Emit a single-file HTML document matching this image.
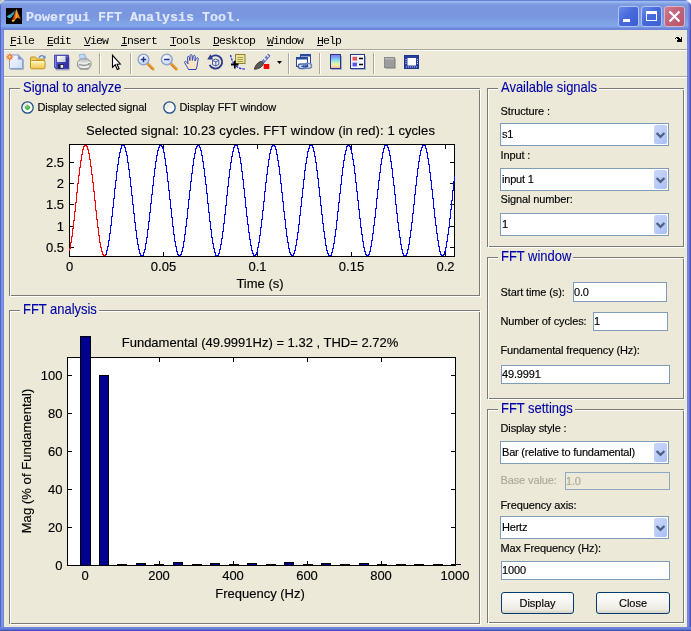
<!DOCTYPE html>
<html><head><meta charset="utf-8"><title>Powergui FFT Analysis Tool.</title>
<style>
html,body{margin:0;padding:0;}
body{width:691px;height:631px;overflow:hidden;background:#ece9d8;position:relative;font-family:"Liberation Sans",sans-serif;font-size:11px;color:#000;}
.abs{position:absolute;}
#fg{position:absolute;left:0;top:0;width:691px;height:631px;will-change:transform;-webkit-text-stroke:0.15px;}
#win{position:absolute;left:0;top:0;width:691px;height:631px;background:#ece9d8;overflow:hidden;}
/* window frame */
#titlebar{position:absolute;left:0;top:0;width:691px;height:30px;
 background:linear-gradient(to bottom,#6282dc 0px,#6282dc 1px,#9db8eb 1px,#9db8eb 2px,#8cabe7 3px,#7e9ee2 4px,#7a96df 6px,#7a96df 17px,#82a7e8 25px,#7fa2e6 27px,#6e88dc 28px,#6a82d8 30px);}
#bl{position:absolute;left:0;top:30px;width:4px;height:601px;background:linear-gradient(to right,#5560cc 0,#5560cc 1px,#7b8fe0 1px,#7b8fe0 2px,#7a98e4 2px,#7a98e4 3px,#6c88dc 3px,#6c88dc 4px);}
#br{position:absolute;left:687px;top:30px;width:4px;height:601px;background:linear-gradient(to right,#7088e0 0,#7088e0 1px,#7488e0 1px,#7488e0 2px,#6070d0 2px,#6070d0 3px,#4850b8 3px,#4850b8 4px);}
#bb{position:absolute;left:0;top:627px;width:691px;height:4px;background:linear-gradient(to bottom,#6c84dc 0,#6c84dc 1px,#6a80da 1px,#6a80da 2px,#5c6ed0 2px,#5c6ed0 3px,#4850b8 3px,#4850b8 4px);}
.corner{position:absolute;width:8px;height:8px;top:0;}
#title{position:absolute;left:26px;top:9px;height:18px;line-height:18px;font-family:"Liberation Mono",monospace;font-weight:bold;font-size:13.33px;color:#dfe8fa;white-space:pre;letter-spacing:0;}
.capbtn{position:absolute;top:6px;width:21px;height:21px;box-sizing:border-box;border:1px solid #b3c3f0;border-radius:3px;background:linear-gradient(135deg,#6b8ae6 0%,#4669dc 45%,#3c5fd4 100%);}
#cclose{background:linear-gradient(135deg,#cf7d90 0%,#c06079 50%,#b9566f 100%);border-color:#d9b5c4;}
/* menu */
#menubar{position:absolute;left:4px;top:30px;width:683px;height:19px;background:#ece9d8;}
.mi{position:absolute;top:35px;height:12px;line-height:12px;font-family:"Liberation Mono",monospace;font-size:11.5px;letter-spacing:-0.9px;white-space:pre;color:#000;-webkit-text-stroke:0;}
.mi u{text-decoration:underline;text-decoration-thickness:1px;text-underline-offset:1px;}
.hline{position:absolute;left:4px;width:683px;height:1px;}
.tsep{position:absolute;top:53px;width:1px;height:21px;background:#aca899;box-shadow:1px 0 0 #fff;}
.ico{position:absolute;top:54px;width:16px;height:16px;}
/* panels */
.panel{position:absolute;box-sizing:border-box;border:1px solid #7c7a72;}
.panel:after{content:"";position:absolute;left:0;top:0;width:calc(100% + 2px);height:calc(100% + 2px);box-sizing:border-box;border:1px solid #fff;}
.ptitle{-webkit-text-stroke:0.1px;letter-spacing:-0.03px;transform:scaleY(1.09);transform-origin:0 12px;position:absolute;height:15px;line-height:15px;font-size:13px;color:#0000a8;padding:0 2px 0 3px;white-space:pre;}
.ptitle:before{content:"";position:absolute;left:0;right:0;top:7.5px;height:3.5px;background:#ece9d8;z-index:-1;}
.lbl{position:absolute;height:13px;line-height:13px;font-size:11px;white-space:pre;color:#000;letter-spacing:-0.12px;}
.t13{position:absolute;height:15px;line-height:15px;font-size:13px;white-space:pre;color:#000;}
.ctr{transform:translateX(-50%);}
.rt{transform:translateX(-100%);}
.edit{position:absolute;box-sizing:border-box;border:1px solid #7f9db9;background:#fff;font-size:11px;line-height:13px;white-space:pre;}
.edit span{position:absolute;left:0px;letter-spacing:-0.15px;}
.dd{position:absolute;box-sizing:border-box;border:1px solid #7f9db9;background:#fff;width:169px;height:23px;left:500px;}
.dd span{position:absolute;left:1px;top:4px;line-height:13px;font-size:11px;white-space:pre;letter-spacing:-0.2px;}
.ddb{position:absolute;right:1px;top:1px;width:13px;height:19px;border-radius:2px;box-sizing:border-box;background:linear-gradient(135deg,#c9d6fb 0%,#bccdf8 50%,#a9bdf4 100%);}
.btn{position:absolute;box-sizing:border-box;width:74px;height:22px;border:1px solid #003c74;border-radius:3px;background:linear-gradient(to bottom,#ffffff 0%,#f5f4ef 50%,#ebe9e0 85%,#d6d0c5 100%);font-size:11px;line-height:20px;text-align:center;}
svg{position:absolute;left:0;top:0;overflow:visible;}
</style></head><body>
<div id="win">
<div id="fg">
<div id="titlebar"></div>
<div id="tle" class="abs" style="left:0;top:3px;width:1px;height:27px;background:#5866cf"></div><div id="tre" class="abs" style="left:688px;top:3px;width:3px;height:27px;background:linear-gradient(to right,rgba(104,120,216,0.5) 0,rgba(104,120,216,0.5) 1px,#6c78d6 1px,#6c78d6 2px,#4e58c0 2px,#4e58c0 3px)"></div><div id="bl"></div><div id="br"></div><div id="bb"></div>
<!-- outer rounded corners -->
<svg width="691" height="10" style="left:0;top:0">
 <path d="M0,0 H5.5 C2.6,0.8 0.8,2.6 0,5 Z" fill="#e4e4e0"/><path d="M0,0 H2.6 L0,2.6 Z" fill="#bcbcb4"/>
 <path d="M691,0 H685.5 C688.4,0.8 690.2,2.6 691,5 Z" fill="#fdfdfd"/>
</svg>
<!-- app icon -->
<svg width="16" height="16" style="left:6px;top:8px" viewBox="0 0 16 16">
 <defs><linearGradient id="mlb" x1="0" y1="0" x2="1" y2="0"><stop offset="0" stop-color="#8c2208"/><stop offset="0.45" stop-color="#e8641a"/><stop offset="0.7" stop-color="#f58a1e"/><stop offset="1" stop-color="#c8440e"/></linearGradient>
 <linearGradient id="mlw" x1="0" y1="1" x2="1" y2="0"><stop offset="0" stop-color="#46c4e4"/><stop offset="1" stop-color="#1e7ea4"/></linearGradient></defs>
 <rect width="16" height="16" fill="#000"/>
 <path d="M0.6,8.2 C3,7.4 5.5,5.6 8.8,2.6 L8.2,5.8 C7,7.2 6.2,8 5.8,9 C4.8,9.6 3.8,10.2 3,10.2 C2.2,9.4 1.4,8.8 0.6,8.2 Z" fill="url(#mlw)"/>
 <path d="M10.3,1 C11.5,3 12.6,6.5 14.8,11.6 C13.2,10.4 12.2,9.6 11.3,9.7 C9.8,10.4 8.6,13.4 6.9,13.9 C6.3,13.4 6,12.8 5.6,12.2 C7.2,9.8 8.8,5 10.3,1 Z" fill="url(#mlb)"/>
 <path d="M10.3,1 C10.7,4 10.9,7 10.8,9.8 C10.3,9.9 9.9,10.3 9.5,10.7 C9.9,7.5 10,4 10.3,1Z" fill="#f9c22e"/>
 <path d="M5.6,12.2 C6,12.8 6.3,13.4 6.9,13.9 C7.8,13.6 8.4,12.6 9,11.6 C7.8,12.2 6.6,12.3 5.6,12.2Z" fill="#f8dc3a"/>
</svg>
<div id="title">Powergui FFT Analysis Tool.</div>
<div class="capbtn" style="left:618px"><div class="abs" style="left:4px;top:12px;width:7px;height:3px;background:#fff"></div></div>
<div class="capbtn" style="left:641px"><div class="abs" style="left:4px;top:4px;width:11px;height:10px;box-sizing:border-box;border:1px solid #fff;border-top-width:3px"></div></div>
<div class="capbtn" id="cclose" style="left:664px"><svg width="19" height="19" viewBox="0 0 19 19"><path d="M4.5,4.5 L14.5,14.5 M14.5,4.5 L4.5,14.5" stroke="#fff" stroke-width="2.2" stroke-linecap="butt"/></svg></div>

<!-- menu bar -->
<div class="mi" style="left:10px"><u>F</u>ile</div>
<div class="mi" style="left:47px"><u>E</u>dit</div>
<div class="mi" style="left:84px"><u>V</u>iew</div>
<div class="mi" style="left:121px"><u>I</u>nsert</div>
<div class="mi" style="left:170px"><u>T</u>ools</div>
<div class="mi" style="left:213px"><u>D</u>esktop</div>
<div class="mi" style="left:267px"><u>W</u>indow</div>
<div class="mi" style="left:317px"><u>H</u>elp</div>
<svg width="691" height="60" shape-rendering="crispEdges" style="left:0;top:0"><path d="M676,37 h3 v1 h1 v1 h1 v-2 h1 v5 h-5 v-2 h1 v-1 h-1 v-1 h-1 z M675,38 h1 v1 h-1z" fill="#000"/></svg>
<div class="hline" style="top:49px;background:#aca899"></div>
<div class="hline" style="top:50px;background:#fff"></div>
<div class="hline" style="top:76px;background:#aca899"></div>
<div class="hline" style="top:77px;background:#fff"></div>

<!-- toolbar -->
<div class="tsep" style="left:99px"></div>
<div class="tsep" style="left:130px"></div>
<div class="tsep" style="left:288px"></div>
<div class="tsep" style="left:319px"></div>
<div class="tsep" style="left:373px"></div>
<svg width="691" height="631" viewBox="0 0 691 631" style="left:0;top:0">
<defs>
 <linearGradient id="gpaper" x1="0" y1="0" x2="1" y2="1"><stop offset="0" stop-color="#ffffff"/><stop offset="1" stop-color="#c9daf5"/></linearGradient>
 <linearGradient id="gfold" x1="0" y1="0" x2="0" y2="1"><stop offset="0" stop-color="#fff6b8"/><stop offset="1" stop-color="#efc650"/></linearGradient>
 <linearGradient id="gcbar" x1="0" y1="0" x2="0" y2="1"><stop offset="0" stop-color="#8a7ee2"/><stop offset="0.18" stop-color="#7c9cf0"/><stop offset="0.38" stop-color="#84d6f2"/><stop offset="0.58" stop-color="#c8f0c0"/><stop offset="0.76" stop-color="#f6f0a0"/><stop offset="1" stop-color="#f2b0a4"/></linearGradient>
 <radialGradient id="glens" cx="40%" cy="35%" r="70%"><stop offset="0" stop-color="#ffffff"/><stop offset="1" stop-color="#bcd2f0"/></radialGradient>
 <linearGradient id="gsave" x1="0" y1="0" x2="1" y2="0.3"><stop offset="0" stop-color="#5c5cd0"/><stop offset="1" stop-color="#3232a4"/></linearGradient>
 <linearGradient id="glabel" x1="0" y1="0" x2="1" y2="1"><stop offset="0" stop-color="#ffffff"/><stop offset="1" stop-color="#c4c8d8"/></linearGradient>
 <linearGradient id="gprp" x1="0" y1="0" x2="1" y2="0"><stop offset="0" stop-color="#d8e8ff"/><stop offset="1" stop-color="#a4c4f4"/></linearGradient>
 <linearGradient id="gprb" x1="0" y1="0" x2="0" y2="1"><stop offset="0" stop-color="#c4c4c4"/><stop offset="0.5" stop-color="#e0e0e0"/><stop offset="1" stop-color="#9c9c9c"/></linearGradient>
</defs>
<!-- new -->
<path d="M10.5,69.5 H23.5 V59.5" fill="none" stroke="#9aa4c4" stroke-width="1" opacity="0.8"/>
<path d="M9.5,55 H18.3 L22.5,59.2 V68.5 H9.5 Z" fill="url(#gpaper)" stroke="#8c9ccc" stroke-width="1"/>
<path d="M18.3,55 V59.2 H22.5 Z" fill="#7f93cf" stroke="#8c9ccc" stroke-width="0.8"/>
<path d="M9.8,53.4 V60.6 M6.2,57 H13.4 M7.3,54.5 L12.3,59.5 M12.3,54.5 L7.3,59.5" stroke="#e8683a" stroke-width="0.9"/>
<circle cx="9.8" cy="57" r="2.2" fill="#f59a3c" stroke="#e8683a" stroke-width="0.7"/>
<circle cx="9.6" cy="56.8" r="1" fill="#fde28a"/>
<!-- open -->
<path d="M38.8,57.6 Q41.8,54 44.6,57.2" fill="none" stroke="#5a86d0" stroke-width="1.3"/>
<path d="M42.7,58.6 L45.8,58.4 L45.2,55.3 Z" fill="#5a86d0"/>
<path d="M30.5,67.5 V58 Q30.5,57 31.5,57 H35 Q35.8,57 36.2,57.8 L36.8,59 H43.5 Q44.5,59 44.5,60 V67.5 Z" fill="#f2cc5e" stroke="#c0921e" stroke-width="1"/>
<rect x="30.5" y="60.5" width="14.5" height="8.3" rx="1.2" fill="url(#gfold)" stroke="#c0921e" stroke-width="1"/>
<path d="M31.8,61.8 H43.6" stroke="#fff8d0" stroke-width="1" opacity="0.9"/>
<!-- save -->
<path d="M55.5,70 H69.3 V57" fill="none" stroke="#8a8aa8" stroke-width="1" opacity="0.6"/>
<path d="M54.5,55.2 H68.5 V68.8 H56 L54.5,67.3 Z" fill="url(#gsave)" stroke="#3a3aa8" stroke-width="1"/>
<path d="M55.3,56 V67" stroke="#8c8ce8" stroke-width="1"/>
<rect x="57" y="56" width="8.6" height="6" fill="url(#glabel)"/>
<rect x="58" y="64.2" width="6" height="4.4" fill="#1c1c50"/>
<rect x="60.6" y="65" width="2.6" height="2.8" fill="#f0f0f6"/>
<rect x="66.6" y="56.3" width="1" height="1.2" fill="#b0b0f0"/>
<!-- print -->
<path d="M80.2,59.6 L79.4,54.6 L84.6,54 L86.8,59.4 Z" fill="url(#gprp)" stroke="#8aa8e0" stroke-width="0.8"/>
<path d="M77.5,62.2 L80.6,58.8 L87.6,59 L91,61.8 V65.8 L88.2,69.2 H80.4 L77.5,66.2 Z" fill="url(#gprb)" stroke="#8c8c8c" stroke-width="0.9"/>
<path d="M78.2,62.6 Q84,64.6 90.4,62.2" fill="none" stroke="#f6f6f6" stroke-width="1"/>
<path d="M79.6,66.4 Q84,68.2 88.8,66.2" fill="none" stroke="#fafafa" stroke-width="1.5"/>
<path d="M79,64.6 Q84,66.4 89.6,64.4" fill="none" stroke="#7a7a7a" stroke-width="0.8"/>
<rect x="88.2" y="63" width="1.5" height="1.2" fill="#40b848"/>
<!-- pointer -->
<path d="M112.5,55.3 V67.3 L115.2,64.8 L117.3,69.6 L119.1,68.8 L117,64.2 L120.3,64 Z" fill="#fff" stroke="#000" stroke-width="1.1" stroke-linejoin="miter"/>
<!-- zoom in -->
<path d="M147.5,63.5 L153,69" stroke="#e89a30" stroke-width="3" stroke-linecap="round"/>
<path d="M148,65 L152.5,69.5" stroke="#b06a18" stroke-width="1" opacity="0.7"/>
<circle cx="143.5" cy="59.5" r="5.4" fill="url(#glens)" stroke="#8aa0cc" stroke-width="1.3"/>
<path d="M140.8,59.5 H146.2 M143.5,56.8 V62.2" stroke="#20308c" stroke-width="1.5"/>
<!-- zoom out -->
<path d="M170.8,63.5 L176.3,69" stroke="#e89a30" stroke-width="3" stroke-linecap="round"/>
<path d="M171.3,65 L175.8,69.5" stroke="#b06a18" stroke-width="1" opacity="0.7"/>
<circle cx="166.8" cy="59.5" r="5.4" fill="url(#glens)" stroke="#8aa0cc" stroke-width="1.3"/>
<path d="M164.1,59.5 H169.5" stroke="#20308c" stroke-width="1.5"/>
<!-- hand -->
<path d="M188.5,69.5 C187,66.5 185.5,64.5 184.6,62.6 C184.2,61.4 185.6,60.8 186.4,61.8 L188,63.8 L187.4,57.6 C187.3,56.2 189,56 189.3,57.4 L189.9,60.6 L190.1,55.6 C190.2,54.2 192,54.2 192.1,55.6 L192.4,60.4 L193.4,56.2 C193.7,54.9 195.4,55.2 195.3,56.6 L194.9,61 L196.4,58.4 C197,57.2 198.6,57.9 198.2,59.2 C197.4,62 197.6,65.5 196,69.5 Z" fill="#fbe3c4" stroke="#2848c0" stroke-width="1"/>
<!-- rotate 3d -->
<path d="M211.2,57 A6.6,6.6 0 1 1 209.6,64.8" fill="none" stroke="#2c3c8c" stroke-width="1.9"/>
<path d="M207.3,59.6 L213.2,59.4 L210.4,54.2 Z" fill="#2c3c8c"/>
<path d="M212.5,60.5 L215.5,59 L218.8,60.3 V64.4 L215.8,66 L212.5,64.6 Z" fill="#e9eef9" stroke="#3a4a98" stroke-width="0.9"/>
<path d="M212.5,60.5 L215.8,61.8 L218.8,60.3 M215.8,61.8 V66" fill="none" stroke="#3a4a98" stroke-width="0.9"/>
<!-- data cursor -->
<rect x="235.5" y="54.5" width="9.5" height="9" fill="#ece4a0" stroke="#8c8428" stroke-width="1"/>
<path d="M237.5,57.5 H243 M237.5,59.5 H243 M237.5,61.5 H243" stroke="#8c8428" stroke-width="1" opacity="0.75"/>
<path d="M230.5,55 C231.5,59 232.5,62 234.5,64.5" fill="none" stroke="#1020f0" stroke-width="1.2" stroke-dasharray="2.4,1"/>
<path d="M236,66 C238.5,68 241,69 245,69" fill="none" stroke="#1020f0" stroke-width="1.2" stroke-dasharray="2.6,1"/>
<path d="M231,64.5 H238.5 M234.8,60.8 V68.4" stroke="#000" stroke-width="1.8"/>
<!-- brush -->
<path d="M262,61.5 L268.2,54.2 L270,55.8 L263.8,63 Z" fill="#7c8cdc" stroke="#3848a8" stroke-width="0.8"/>
<path d="M264,58.4 L265.8,60" stroke="#eef2ff" stroke-width="1.6"/>
<path d="M266.8,55.2 L268.6,56.8" stroke="#eef2ff" stroke-width="1.2"/>
<path d="M254.3,69.3 C255,66 257,62.5 261.2,61.2 L263.6,63.4 C262.5,67 259,69 254.3,69.3 Z" fill="#5a5a5a" stroke="#303030" stroke-width="0.8"/>
<rect x="263.7" y="64" width="5.6" height="5" fill="#ff0000"/>
<path d="M277,61 H282 L279.5,64 Z" fill="#000"/>
<!-- link -->
<rect x="300.5" y="54.5" width="10" height="9" fill="#fff" stroke="#28489c" stroke-width="1"/>
<rect x="300.5" y="54.5" width="10" height="2" fill="#28489c"/>
<rect x="296.5" y="57.5" width="11" height="9" fill="#fff" stroke="#28489c" stroke-width="1"/>
<rect x="296.5" y="57.5" width="11" height="2" fill="#28489c"/>
<rect x="298.3" y="64" width="8" height="4.6" rx="2.3" fill="#dfe7f5" stroke="#4a68a8" stroke-width="1.5"/>
<rect x="303.5" y="63.6" width="8" height="4.6" rx="2.3" fill="none" stroke="#6a88c0" stroke-width="1.5"/>
<path d="M301.3,66.3 H308.3" stroke="#28489c" stroke-width="1.3"/>
<!-- colorbar -->
<rect x="330.5" y="54.5" width="10" height="14" fill="url(#gcbar)" stroke="#28388c" stroke-width="1"/>
<path d="M331,69.5 H341.5 V56" fill="none" stroke="#8a94b8" stroke-width="1" opacity="0.7"/>
<!-- legend -->
<rect x="350.5" y="54.5" width="14" height="14" fill="#f4f6fb" stroke="#28388c" stroke-width="1"/>
<path d="M351,69.5 H365.5 V56" fill="none" stroke="#8a94b8" stroke-width="1" opacity="0.7"/>
<rect x="352.5" y="56.8" width="4.5" height="3.8" fill="#e85858"/>
<rect x="352.5" y="62.6" width="4.5" height="3.8" fill="#5858e0"/>
<path d="M359,58.5 H363 M359,64.5 H363" stroke="#000" stroke-width="1.3"/>
<!-- hide plot tools -->
<rect x="384.5" y="57.5" width="10" height="10" fill="#9c9c9c" stroke="#8a8a8a" stroke-width="1"/>
<rect x="385" y="58" width="9" height="1.6" fill="#b6b6b6"/>
<path d="M385.5,68.5 H395.5 V58.5" fill="none" stroke="#b0b0a8" stroke-width="1"/>
<!-- show plot tools -->
<rect x="404.5" y="55.5" width="14" height="13" fill="#28409c" stroke="#20348c" stroke-width="1"/>
<rect x="407.5" y="58" width="8.5" height="7.5" fill="#ffffff"/>
<path d="M406,59 V65 M417.5,59 V65" stroke="#c8d0f0" stroke-width="1" stroke-dasharray="1,1"/>
<path d="M406,67 H418" stroke="#c8d0f0" stroke-width="1" stroke-dasharray="1,1"/>
</svg>



<!-- panels -->
<div class="panel" style="left:9px;top:88px;width:471px;height:208px"></div>
<div class="panel" style="left:9px;top:310px;width:471px;height:314px"></div>
<div class="panel" style="left:487px;top:88px;width:197px;height:159px"></div>
<div class="panel" style="left:487px;top:257px;width:197px;height:142px"></div>
<div class="panel" style="left:487px;top:409px;width:197px;height:214px"></div>
<div class="ptitle" style="left:20px;top:80px">Signal to analyze</div>
<div class="ptitle" style="left:20px;top:302px">FFT analysis</div>
<div class="ptitle" style="left:498px;top:80px">Available signals</div>
<div class="ptitle" style="left:498px;top:249px">FFT window</div>
<div class="ptitle" style="left:498px;top:401px">FFT settings</div>

<!-- radio buttons -->
<svg width="14" height="14" style="left:21px;top:101px" viewBox="0 0 14 14">
 <defs><radialGradient id="rg" cx="35%" cy="35%" r="75%"><stop offset="0" stop-color="#e8e8e2"/><stop offset="0.6" stop-color="#fafaf8"/><stop offset="1" stop-color="#ffffff"/></radialGradient>
 <radialGradient id="gd" cx="40%" cy="40%" r="65%"><stop offset="0" stop-color="#6fe36a"/><stop offset="1" stop-color="#1e9a1e"/></radialGradient></defs>
 <circle cx="6.5" cy="6.5" r="5.7" fill="url(#rg)" stroke="#1c4f88" stroke-width="1.25"/>
 <path d="M6.5,3.9 Q7.6,5.4 9.1,6.5 Q7.6,7.6 6.5,9.1 Q5.4,7.6 3.9,6.5 Q5.4,5.4 6.5,3.9Z" fill="url(#gd)" stroke="#2aa52a" stroke-width="0.8" stroke-linejoin="round"/>
</svg>
<svg width="14" height="14" style="left:163px;top:101px" viewBox="0 0 14 14">
 <circle cx="6.5" cy="6.5" r="5.7" fill="url(#rg)" stroke="#1c4f88" stroke-width="1.25"/>
</svg>
<div class="lbl" style="left:37.5px;top:101px">Display selected signal</div>
<div class="lbl" style="left:179.5px;top:101px">Display FFT window</div>

<!-- plot 1 -->
<div class="t13 ctr" style="left:260.5px;top:123px;letter-spacing:0.075px">Selected signal: 10.23 cycles. FFT window (in red): 1 cycles</div>
<svg width="691" height="631" shape-rendering="crispEdges">
 <rect x="69.5" y="144.5" width="385" height="112" fill="#fff" stroke="#000" stroke-width="1"/>
 <g stroke="#000" stroke-width="1">
  <path d="M163.5,256 v-4 M163.5,145 v4 M257.5,256 v-4 M257.5,145 v4 M351.5,256 v-4 M351.5,145 v4 M445.5,256 v-4 M445.5,145 v4"/>
  <path d="M70,247.5 h4 M454,247.5 h-4 M70,226.5 h4 M454,226.5 h-4 M70,204.5 h4 M454,204.5 h-4 M70,183.5 h4 M454,183.5 h-4 M70,162.5 h4 M454,162.5 h-4"/>
 </g>
 <path d="M69.5,248 v3 M70.5,242 v7 M71.5,236 v7 M72.5,228 v9 M73.5,220 v9 M74.5,211 v10 M75.5,202 v10 M76.5,192 v11 M77.5,183 v10 M78.5,175 v9 M79.5,167 v9 M80.5,160 v8 M81.5,154 v7 M82.5,149 v6 M83.5,146 v4 M84.5,145 v2 M85.5,145 v1 M86.5,145 v2 M87.5,146 v4 M88.5,149 v5 M89.5,153 v7 M90.5,159 v8 M91.5,166 v9 M92.5,174 v9 M93.5,182 v10 M94.5,191 v10 M95.5,200 v11 M96.5,210 v10 M97.5,219 v9 M98.5,227 v9 M99.5,235 v8 M100.5,242 v6 M101.5,247 v5 M102.5,251 v4 M103.5,254 v2 M104.5,255 v1 M105.5,254 v2" fill="none" stroke="#ff0000" stroke-width="1"/>
 <path d="M106.5,250 v5 M107.5,246 v5 M108.5,240 v7 M109.5,233 v8 M110.5,225 v9 M111.5,216 v10 M112.5,207 v10 M113.5,198 v10 M114.5,188 v11 M115.5,180 v9 M116.5,171 v10 M117.5,164 v8 M118.5,157 v8 M119.5,152 v6 M120.5,148 v5 M121.5,145 v4 M122.5,145 v1 M123.5,145 v1 M124.5,145 v3 M125.5,147 v5 M126.5,151 v5 M127.5,155 v8 M128.5,162 v8 M129.5,169 v9 M130.5,177 v10 M131.5,186 v10 M132.5,195 v10 M133.5,204 v10 M134.5,213 v10 M135.5,222 v9 M136.5,230 v9 M137.5,238 v7 M138.5,244 v6 M139.5,249 v5 M140.5,253 v3 M141.5,255 v1 M142.5,255 v1 M143.5,252 v4 M144.5,249 v4 M145.5,243 v7 M146.5,237 v7 M147.5,229 v9 M148.5,221 v9 M149.5,212 v10 M150.5,203 v10 M151.5,194 v10 M152.5,185 v10 M153.5,176 v10 M154.5,168 v9 M155.5,161 v8 M156.5,155 v7 M157.5,150 v6 M158.5,147 v4 M159.5,145 v3 M160.5,145 v1 M161.5,145 v2 M162.5,146 v3 M163.5,148 v5 M164.5,152 v7 M165.5,158 v8 M166.5,165 v8 M167.5,172 v10 M168.5,181 v10 M169.5,190 v10 M170.5,199 v10 M171.5,208 v10 M172.5,217 v10 M173.5,226 v9 M174.5,234 v8 M175.5,241 v6 M176.5,246 v6 M177.5,251 v4 M178.5,254 v2 M179.5,255 v1 M180.5,254 v2 M181.5,251 v4 M182.5,247 v5 M183.5,241 v7 M184.5,234 v8 M185.5,226 v9 M186.5,218 v9 M187.5,208 v11 M188.5,199 v10 M189.5,190 v10 M190.5,181 v10 M191.5,173 v9 M192.5,165 v9 M193.5,158 v8 M194.5,153 v6 M195.5,148 v6 M196.5,146 v3 M197.5,145 v2 M198.5,145 v1 M199.5,145 v3 M200.5,147 v4 M201.5,150 v6 M202.5,155 v7 M203.5,161 v8 M204.5,168 v9 M205.5,176 v9 M206.5,184 v10 M207.5,193 v11 M208.5,203 v10 M209.5,212 v10 M210.5,221 v9 M211.5,229 v9 M212.5,237 v7 M213.5,243 v6 M214.5,248 v5 M215.5,252 v4 M216.5,255 v1 M217.5,255 v1 M218.5,253 v3 M219.5,249 v5 M220.5,244 v6 M221.5,238 v7 M222.5,231 v8 M223.5,223 v9 M224.5,214 v10 M225.5,205 v10 M226.5,195 v11 M227.5,186 v10 M228.5,177 v10 M229.5,169 v9 M230.5,162 v8 M231.5,156 v7 M232.5,151 v6 M233.5,147 v5 M234.5,145 v3 M235.5,145 v1 M236.5,145 v1 M237.5,145 v4 M238.5,148 v5 M239.5,152 v6 M240.5,157 v7 M241.5,163 v9 M242.5,171 v9 M243.5,179 v10 M244.5,188 v10 M245.5,197 v11 M246.5,207 v10 M247.5,216 v9 M248.5,224 v9 M249.5,232 v8 M250.5,239 v7 M251.5,245 v6 M252.5,250 v4 M253.5,253 v3 M254.5,255 v1 M255.5,254 v2 M256.5,252 v3 M257.5,247 v6 M258.5,242 v6 M259.5,235 v8 M260.5,227 v9 M261.5,219 v9 M262.5,210 v10 M263.5,201 v10 M264.5,191 v11 M265.5,182 v10 M266.5,174 v9 M267.5,166 v9 M268.5,159 v8 M269.5,153 v7 M270.5,149 v5 M271.5,146 v4 M272.5,145 v2 M273.5,145 v1 M274.5,145 v2 M275.5,146 v4 M276.5,149 v6 M277.5,154 v7 M278.5,160 v7 M279.5,166 v9 M280.5,174 v10 M281.5,183 v10 M282.5,192 v10 M283.5,201 v11 M284.5,211 v9 M285.5,219 v10 M286.5,228 v9 M287.5,236 v7 M288.5,242 v7 M289.5,248 v5 M290.5,252 v3 M291.5,254 v2 M292.5,255 v1 M293.5,253 v3 M294.5,250 v4 M295.5,245 v6 M296.5,239 v7 M297.5,232 v8 M298.5,224 v9 M299.5,215 v10 M300.5,206 v10 M301.5,197 v10 M302.5,188 v10 M303.5,179 v10 M304.5,170 v10 M305.5,163 v8 M306.5,157 v7 M307.5,151 v7 M308.5,148 v4 M309.5,145 v4 M310.5,145 v1 M311.5,145 v1 M312.5,145 v3 M313.5,147 v5 M314.5,151 v6 M315.5,156 v7 M316.5,162 v9 M317.5,170 v9 M318.5,178 v10 M319.5,187 v10 M320.5,196 v10 M321.5,205 v10 M322.5,214 v10 M323.5,223 v9 M324.5,231 v8 M325.5,238 v8 M326.5,245 v6 M327.5,250 v4 M328.5,253 v3 M329.5,255 v1 M330.5,255 v1 M331.5,252 v4 M332.5,248 v5 M333.5,243 v6 M334.5,236 v8 M335.5,229 v8 M336.5,220 v10 M337.5,211 v10 M338.5,202 v10 M339.5,193 v10 M340.5,184 v10 M341.5,175 v10 M342.5,167 v9 M343.5,160 v8 M344.5,154 v7 M345.5,150 v5 M346.5,146 v5 M347.5,145 v2 M348.5,145 v1 M349.5,145 v2 M350.5,146 v4 M351.5,149 v5 M352.5,153 v7 M353.5,159 v7 M354.5,165 v9 M355.5,173 v10 M356.5,182 v10 M357.5,191 v10 M358.5,200 v10 M359.5,209 v10 M360.5,218 v10 M361.5,227 v8 M362.5,234 v8 M363.5,241 v7 M364.5,247 v5 M365.5,251 v4 M366.5,254 v2 M367.5,255 v1 M368.5,254 v2 M369.5,251 v4 M370.5,246 v6 M371.5,240 v7 M372.5,233 v8 M373.5,225 v9 M374.5,217 v9 M375.5,208 v10 M376.5,198 v11 M377.5,189 v10 M378.5,180 v10 M379.5,172 v9 M380.5,164 v9 M381.5,158 v7 M382.5,152 v7 M383.5,148 v5 M384.5,145 v4 M385.5,145 v1 M386.5,145 v1 M387.5,145 v3 M388.5,147 v4 M389.5,150 v6 M390.5,155 v7 M391.5,161 v8 M392.5,168 v10 M393.5,177 v9 M394.5,185 v10 M395.5,194 v11 M396.5,204 v10 M397.5,213 v10 M398.5,222 v9 M399.5,230 v8 M400.5,237 v8 M401.5,244 v6 M402.5,249 v5 M403.5,253 v3 M404.5,255 v1 M405.5,255 v1 M406.5,253 v3 M407.5,249 v5 M408.5,244 v6 M409.5,237 v8 M410.5,230 v8 M411.5,222 v9 M412.5,213 v10 M413.5,204 v10 M414.5,194 v11 M415.5,185 v10 M416.5,176 v10 M417.5,168 v9 M418.5,161 v8 M419.5,155 v7 M420.5,150 v6 M421.5,147 v4 M422.5,145 v3 M423.5,145 v1 M424.5,145 v1 M425.5,145 v4 M426.5,148 v5 M427.5,152 v7 M428.5,158 v7 M429.5,164 v9 M430.5,172 v9 M431.5,180 v10 M432.5,189 v10 M433.5,198 v11 M434.5,208 v10 M435.5,217 v9 M436.5,225 v9 M437.5,233 v8 M438.5,240 v7 M439.5,246 v6 M440.5,251 v4 M441.5,254 v2 M442.5,255 v1 M443.5,254 v2 M444.5,251 v4 M445.5,247 v5 M446.5,241 v7 M447.5,234 v8 M448.5,227 v8 M449.5,218 v10 M450.5,209 v10 M451.5,200 v10 M452.5,190 v11 M453.5,181 v10 M454.5,176 v6" fill="none" stroke="#0000ff" stroke-width="1"/>
</svg>
<div class="t13 rt" style="left:64px;top:240px">0.5</div>
<div class="t13 rt" style="left:64px;top:219px">1</div>
<div class="t13 rt" style="left:64px;top:197px">1.5</div>
<div class="t13 rt" style="left:64px;top:176px">2</div>
<div class="t13 rt" style="left:64px;top:155px">2.5</div>
<div class="t13 ctr" style="left:69.5px;top:259px">0</div>
<div class="t13 ctr" style="left:163.5px;top:259px">0.05</div>
<div class="t13 ctr" style="left:257.5px;top:259px">0.1</div>
<div class="t13 ctr" style="left:351.5px;top:259px">0.15</div>
<div class="t13 ctr" style="left:445.5px;top:259px">0.2</div>
<div class="t13 ctr" style="left:260px;top:276px">Time (s)</div>

<!-- plot 2 -->
<div class="t13 ctr" style="left:260px;top:335px">Fundamental (49.9991Hz) = 1.32 , THD= 2.72%</div>
<svg width="691" height="631" shape-rendering="crispEdges">
 <rect x="67.5" y="357.5" width="388" height="208" fill="#fff" stroke="#000" stroke-width="1"/>
 <g stroke="#000" stroke-width="1">
  <path d="M85.5,565 v-4 M85.5,358 v4 M159.5,565 v-4 M159.5,358 v4 M233.5,565 v-4 M233.5,358 v4 M307.5,565 v-4 M307.5,358 v4 M381.5,565 v-4 M381.5,358 v4"/>
  <path d="M68,527.5 h4 M455,527.5 h-4 M68,489.5 h4 M455,489.5 h-4 M68,451.5 h4 M455,451.5 h-4 M68,413.5 h4 M455,413.5 h-4 M68,375.5 h4 M455,375.5 h-4"/>
 </g>
 <rect x="80.5" y="336.5" width="10" height="229" fill="#00008f" stroke="#000" stroke-width="1"/>
<rect x="99.5" y="375.5" width="9" height="190" fill="#00008f" stroke="#000" stroke-width="1"/>
<rect x="117" y="564" width="10" height="1" fill="#000"/>
<rect x="136.5" y="563.5" width="9" height="2" fill="#00008f" stroke="#000" stroke-width="1"/>
<rect x="154" y="564" width="10" height="1" fill="#000"/>
<rect x="173.5" y="562.5" width="9" height="3" fill="#00008f" stroke="#000" stroke-width="1"/>
<rect x="192" y="564" width="10" height="1" fill="#000"/>
<rect x="210.5" y="563.5" width="9" height="2" fill="#00008f" stroke="#000" stroke-width="1"/>
<rect x="229" y="564" width="10" height="1" fill="#000"/>
<rect x="247.5" y="563.5" width="9" height="2" fill="#00008f" stroke="#000" stroke-width="1"/>
<rect x="266" y="564" width="10" height="1" fill="#000"/>
<rect x="284.5" y="562.5" width="9" height="3" fill="#00008f" stroke="#000" stroke-width="1"/>
<rect x="303" y="564" width="10" height="1" fill="#000"/>
<rect x="321.5" y="563.5" width="9" height="2" fill="#00008f" stroke="#000" stroke-width="1"/>
<rect x="340" y="564" width="10" height="1" fill="#000"/>
<rect x="359.5" y="563.5" width="9" height="2" fill="#00008f" stroke="#000" stroke-width="1"/>
<rect x="377" y="564" width="10" height="1" fill="#000"/>
<rect x="396" y="564" width="10" height="1" fill="#000"/>
<rect x="414" y="564" width="10" height="1" fill="#000"/>
<rect x="433" y="564" width="10" height="1" fill="#000"/>
<rect x="451" y="564" width="10" height="1" fill="#000"/>
 <path d="M67.5,565.5 H455.5" stroke="#000" stroke-width="1"/>
</svg>
<div class="t13 rt" style="left:62.5px;top:558px">0</div>
<div class="t13 rt" style="left:62.5px;top:520px">20</div>
<div class="t13 rt" style="left:62.5px;top:482px">40</div>
<div class="t13 rt" style="left:62.5px;top:444px">60</div>
<div class="t13 rt" style="left:62.5px;top:406px">80</div>
<div class="t13 rt" style="left:62.5px;top:368px">100</div>
<div class="t13 ctr" style="left:85.0px;top:568px">0</div>
<div class="t13 ctr" style="left:159.0px;top:568px">200</div>
<div class="t13 ctr" style="left:233.0px;top:568px">400</div>
<div class="t13 ctr" style="left:307.0px;top:568px">600</div>
<div class="t13 ctr" style="left:381.0px;top:568px">800</div>
<div class="t13 ctr" style="left:455.0px;top:568px">1000</div>
<div class="t13 ctr" style="left:260px;top:586px">Frequency (Hz)</div>
<div class="t13" style="left:26px;top:460.5px;letter-spacing:0.07px;transform:translate(-50%,-50%) rotate(-90deg);">Mag (% of Fundamental)</div>

<!-- Available signals -->
<div class="lbl" style="left:500.5px;top:105px">Structure :</div>
<div class="dd" style="top:123px"><span>s1</span><div class="ddb"><svg width="13" height="19" viewBox="0 0 13 19"><path d="M2.6,8 L6.5,11.9 L10.4,8" fill="none" stroke="#4d6185" stroke-width="2.3"/></svg></div></div>
<div class="lbl" style="left:500.5px;top:149px">Input :</div>
<div class="dd" style="top:168px"><span>input 1</span><div class="ddb"><svg width="13" height="19" viewBox="0 0 13 19"><path d="M2.6,8 L6.5,11.9 L10.4,8" fill="none" stroke="#4d6185" stroke-width="2.3"/></svg></div></div>
<div class="lbl" style="left:500.5px;top:193px">Signal number:</div>
<div class="dd" style="top:213px"><span>1</span><div class="ddb"><svg width="13" height="19" viewBox="0 0 13 19"><path d="M2.6,8 L6.5,11.9 L10.4,8" fill="none" stroke="#4d6185" stroke-width="2.3"/></svg></div></div>

<!-- FFT window -->
<div class="lbl" style="left:500.5px;top:286px">Start time (s):</div>
<div class="edit" style="left:573px;top:282px;width:94px;height:20px"><span style="top:3px">0.0</span></div>
<div class="lbl" style="left:500.5px;top:315px">Number of cycles:</div>
<div class="edit" style="left:593px;top:312px;width:75px;height:19px"><span style="top:2px">1</span></div>
<div class="lbl" style="left:500.5px;top:344px">Fundamental frequency (Hz):</div>
<div class="edit" style="left:501px;top:365px;width:169px;height:19px"><span style="top:2px">49.9991</span></div>

<!-- FFT settings -->
<div class="lbl" style="left:500.5px;top:422px">Display style :</div>
<div class="dd" style="top:441px"><span>Bar (relative to fundamental)</span><div class="ddb"><svg width="13" height="19" viewBox="0 0 13 19"><path d="M2.6,8 L6.5,11.9 L10.4,8" fill="none" stroke="#4d6185" stroke-width="2.3"/></svg></div></div>
<div class="lbl" style="left:500.5px;top:474px;color:#aca899">Base value:</div>
<div class="edit" style="left:565px;top:472px;width:105px;height:18px;background:#ece9d8;border-color:#8fa8c4;color:#aca899"><span style="top:2px">1.0</span></div>
<div class="lbl" style="left:500.5px;top:499px">Frequency axis:</div>
<div class="dd" style="top:516px"><span>Hertz</span><div class="ddb"><svg width="13" height="19" viewBox="0 0 13 19"><path d="M2.6,8 L6.5,11.9 L10.4,8" fill="none" stroke="#4d6185" stroke-width="2.3"/></svg></div></div>
<div class="lbl" style="left:500.5px;top:542px">Max Frequency (Hz):</div>
<div class="edit" style="left:501px;top:561px;width:169px;height:19px"><span style="top:2px">1000</span></div>
<div class="btn" style="left:501px;top:592px;width:73px">Display</div>
<div class="btn" style="left:596px;top:592px">Close</div>
</div>
</div>
</body></html>
